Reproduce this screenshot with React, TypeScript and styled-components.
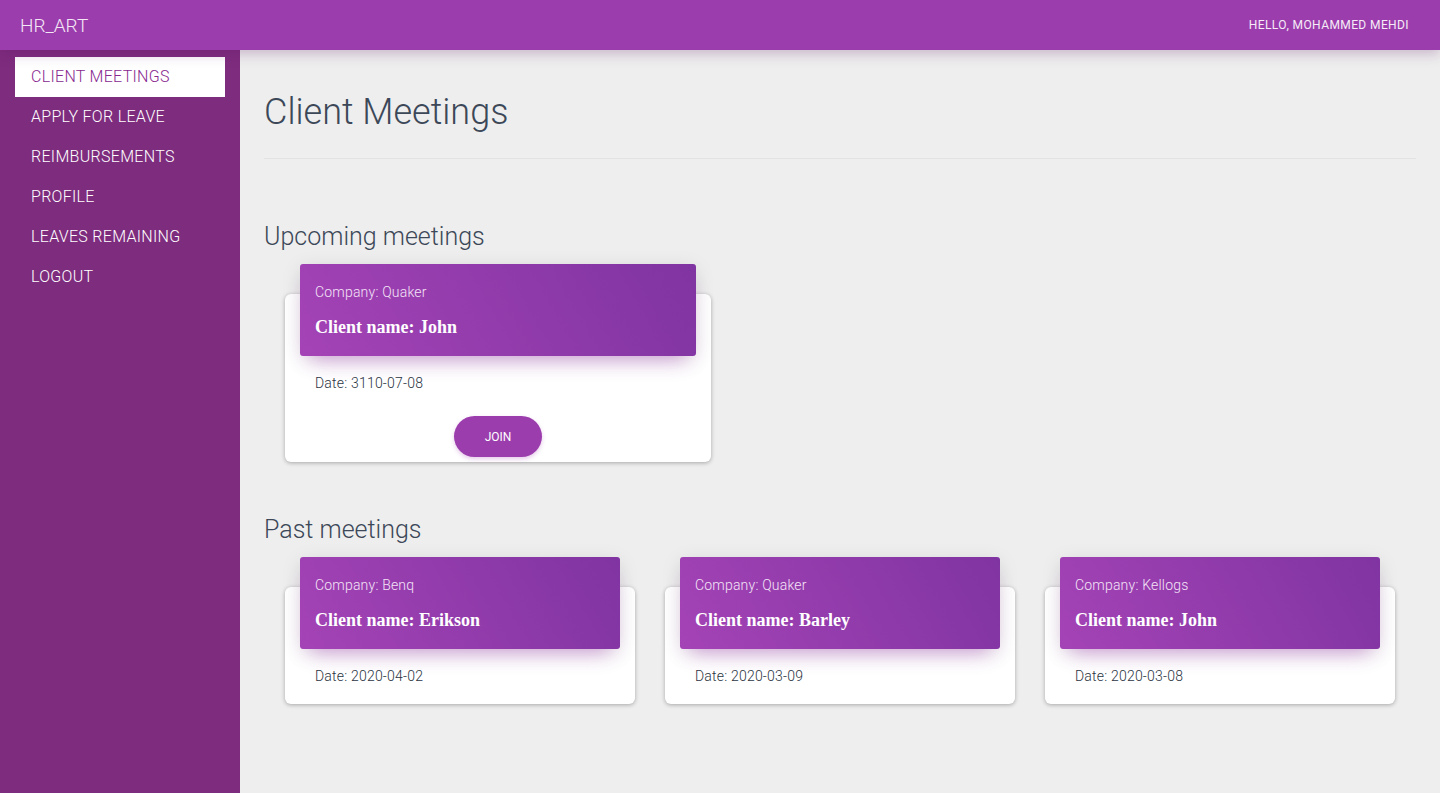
import React from 'react';
import styled, { createGlobalStyle } from 'styled-components';

const GlobalStyle = createGlobalStyle`
  html, body {
    margin: 0;
    padding: 0;
    height: 100%;
  }
  body {
    font-family: Roboto, "Liberation Sans", Arial, sans-serif;
    font-weight: 300;
    background: #eeeeee;
  }
  * {
    box-sizing: border-box;
  }
`;

type Meeting = {
  company: string;
  client: string;
  date: string;
};

const upcoming: Meeting[] = [{ company: 'Quaker', client: 'John', date: '3110-07-08' }];

const past: Meeting[] = [
  { company: 'Benq', client: 'Erikson', date: '2020-04-02' },
  { company: 'Quaker', client: 'Barley', date: '2020-03-09' },
  { company: 'Kellogs', client: 'John', date: '2020-03-08' },
];

const navItems = [
  'CLIENT MEETINGS',
  'APPLY FOR LEAVE',
  'REIMBURSEMENTS',
  'PROFILE',
  'LEAVES REMAINING',
  'LOGOUT',
];

const MeetingCard = ({ meeting, upcoming }: { meeting: Meeting; upcoming?: boolean }) => {
  return (
    <Card $wide={upcoming}>
      <CardHeader>
        <Company>Company: {meeting.company}</Company>
        <ClientName>Client name: {meeting.client}</ClientName>
      </CardHeader>
      <CardBody $upcoming={upcoming}>
        <DateText>Date: {meeting.date}</DateText>
        {upcoming && <JoinButton>JOIN</JoinButton>}
      </CardBody>
    </Card>
  );
};

const App = () => {
  return (
    <>
      <GlobalStyle />
      <Page>
        <TopBar>
          <Brand>HR_ART</Brand>
          <Greeting>HELLO, MOHAMMED MEHDI</Greeting>
        </TopBar>
        <Body>
          <Sidebar>
            {navItems.map((item, i) => (
              <NavItem key={item} $active={i === 0}>
                {item}
              </NavItem>
            ))}
          </Sidebar>
          <Main>
            <Title>Client Meetings</Title>
            <Divider />
            <SectionTitle>Upcoming meetings</SectionTitle>
            <CardRow>
              {upcoming.map((m) => (
                <MeetingCard key={m.company + m.date} meeting={m} upcoming />
              ))}
            </CardRow>
            <SectionTitle $past>Past meetings</SectionTitle>
            <CardRow>
              {past.map((m) => (
                <MeetingCard key={m.company + m.date} meeting={m} />
              ))}
            </CardRow>
          </Main>
        </Body>
      </Page>
    </>
  );
};

export default App;

const Page = styled.div`
  display: flex;
  flex-direction: column;
  width: 100%;
  min-height: 100vh;
`;

const TopBar = styled.header`
  position: relative;
  z-index: 2;
  display: flex;
  align-items: center;
  justify-content: space-between;
  height: 50px;
  padding: 0 31px 0 20px;
  background: #9c3dad;
  color: #fff;
  box-shadow: 0 4px 12px rgba(90, 20, 100, 0.25);
`;

const Brand = styled.div`
  font-size: 19px;
  font-weight: 300;
  color: #f3e6f5;
`;

const Greeting = styled.div`
  font-size: 12px;
  font-weight: 400;
  letter-spacing: 0.4px;
  color: #f5ecf7;
`;

const Body = styled.div`
  display: flex;
  flex: 1;
  min-height: 743px;
`;

const Sidebar = styled.nav`
  display: flex;
  flex-direction: column;
  width: 240px;
  flex-shrink: 0;
  padding: 7px 15px 0;
  background: #7e2c7e;
`;

const NavItem = styled.div<{ $active?: boolean }>`
  display: flex;
  align-items: center;
  height: 40px;
  padding: 0 0 1px 16px;
  font-size: 16px;
  font-weight: 300;
  letter-spacing: 0.3px;
  color: ${(p) => (p.$active ? '#87288f' : '#ffffff')};
  background: ${(p) => (p.$active ? '#ffffff' : 'transparent')};
`;

const Main = styled.main`
  flex: 1;
  padding: 0 24px 40px;
  background: #eeeeee;
`;

const Title = styled.h1`
  margin: 0;
  padding-top: 39px;
  font-size: 36px;
  line-height: 46px;
  font-weight: 300;
  color: #3c4858;
`;

const Divider = styled.hr`
  margin: 23px 0 0;
  border: none;
  border-top: 1px solid #e2e2e2;
`;

const SectionTitle = styled.h2<{ $past?: boolean }>`
  margin: ${(p) => (p.$past ? '53px' : '63px')} 0 0;
  font-size: 25px;
  line-height: 30px;
  font-weight: 300;
  color: #3c4858;
`;

const CardRow = styled.div`
  display: flex;
  gap: 30px;
  padding-left: 21px;
`;

const Card = styled.div<{ $wide?: boolean }>`
  width: ${(p) => (p.$wide ? '426px' : '350px')};
  margin-top: 42px;
  background: #ffffff;
  border-radius: 6px;
  box-shadow: 0 1px 4px rgba(0, 0, 0, 0.3);
`;

const CardHeader = styled.div`
  margin: -30px 15px 0;
  height: 92px;
  padding: 18px 15px 0;
  border-radius: 3px;
  background: linear-gradient(60deg, #a443b6, #8034a2);
  color: #fff;
  box-shadow: 0 12px 20px -10px rgba(156, 39, 176, 0.45), 0 4px 20px rgba(0, 0, 0, 0.1);
`;

const Company = styled.div`
  font-size: 14px;
  line-height: 20px;
  font-weight: 300;
  letter-spacing: 0.2px;
  color: #f4e4f7;
`;

const ClientName = styled.div`
  margin-top: 14px;
  font-family: "Liberation Serif", "Times New Roman", serif;
  font-size: 18px;
  line-height: 22px;
  font-weight: 700;
`;

const CardBody = styled.div<{ $upcoming?: boolean }>`
  display: flex;
  flex-direction: column;
  padding: 17px 30px ${(p) => (p.$upcoming ? '5px' : '18px')};
`;

const DateText = styled.div`
  font-size: 14px;
  line-height: 20px;
  font-weight: 300;
  letter-spacing: 0.2px;
  color: #2a3442;
`;

const JoinButton = styled.button`
  align-self: center;
  width: 88px;
  height: 41px;
  margin-top: 23px;
  border: none;
  border-radius: 21px;
  background: #9c3dad;
  color: #fff;
  font-family: Roboto, "Liberation Sans", Arial, sans-serif;
  font-size: 12px;
  font-weight: 400;
  box-shadow: 0 2px 4px rgba(156, 39, 176, 0.25);
  cursor: pointer;
`;
